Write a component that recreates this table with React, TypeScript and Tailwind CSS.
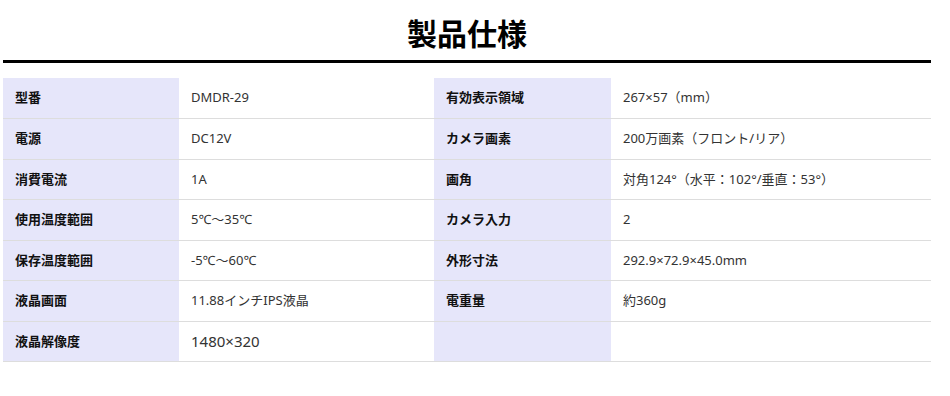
const rows: [string, string, string, string][] = [
  ["型番", "DMDR-29", "有効表示領域", "267×57（mm）"],
  ["電源", "DC12V", "カメラ画素", "200万画素（フロント/リア）"],
  ["消費電流", "1A", "画角", "対角124°（水平：102°/垂直：53°）"],
  ["使用温度範囲", "5℃～35℃", "カメラ入力", "2"],
  ["保存温度範囲", "-5℃～60℃", "外形寸法", "292.9×72.9×45.0mm"],
  ["液晶画面", "11.88インチIPS液晶", "電重量", "約360g"],
  ["液晶解像度", "1480×320", "", ""],
];

const font = { fontFamily: '"Noto Sans", "Noto Sans CJK JP", sans-serif' };

export default function App() {
  return (
    <div className="min-h-[396px] bg-white" style={font}>
      <div className="ml-[3px] w-[928px]">
        <h1
          className="border-b-[3px] border-black pt-[12px] pb-[8px] text-center text-[30px] font-bold leading-[40px] text-black"
          style={{ fontFamily: '"Noto Sans CJK JP", sans-serif' }}
        >
          製品仕様
        </h1>
        <table className="mt-[15px] w-full border-collapse text-[13px]">
          <tbody>
            {rows.map(([l1, v1, l2, v2], i) => (
              <tr key={i} className="h-[40.5px] border-b border-[#dddddd]">
                <th className="w-[176px] bg-[#e6e6fa] px-3 text-left font-bold text-[#111]">{l1}</th>
                <td
                  className={
                    "w-[255px] px-3 text-[#333] " + (l1 === "液晶解像度" ? "text-[15px]" : "")
                  }
                >
                  {v1}
                </td>
                <th className="w-[177px] bg-[#e6e6fa] px-3 text-left font-bold text-[#111]">{l2}</th>
                <td className="px-3 text-[#333]">{v2}</td>
              </tr>
            ))}
          </tbody>
        </table>
      </div>
    </div>
  );
}
